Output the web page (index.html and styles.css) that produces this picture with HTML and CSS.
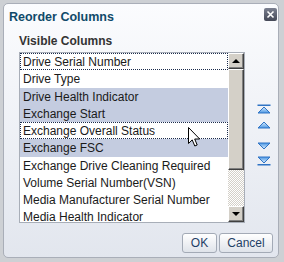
FILE: index.html
```html
<!DOCTYPE html>
<html lang="en">
<head>
    <meta charset="UTF-8">
    <title>Reorder Columns</title>
    <link rel="stylesheet" href="styles.css">
</head>
<body>
    <div class="dialog">
        <div class="dlg-header">
            <div class="dlg-title">Reorder Columns</div>
            <div class="dlg-close">
                <svg width="13" height="13" viewBox="0 0 13 13">
                    <path d="M3.5 3.5 L9.5 9.5 M9.5 3.5 L3.5 9.5" stroke="#fff" stroke-width="1.6"/>
                </svg>
            </div>
        </div>

        <div class="dlg-body">
            <div class="list-label">Visible Columns</div>
            <div class="list-row">
                <div class="listbox">
                    <div class="items">
                        <div class="item focus">Drive Serial Number</div>
                        <div class="item">Drive Type</div>
                        <div class="item selected">Drive Health Indicator</div>
                        <div class="item selected">Exchange Start</div>
                        <div class="item focus">Exchange Overall Status</div>
                        <div class="item selected">Exchange FSC</div>
                        <div class="item">Exchange Drive Cleaning Required</div>
                        <div class="item">Volume Serial Number(VSN)</div>
                        <div class="item">Media Manufacturer Serial Number</div>
                        <div class="item">Media Health Indicator</div>
                    </div>
                    <div class="scrollbar">
                        <div class="sb-btn"><span class="sb-arrow up"></span></div>
                        <div class="sb-thumb"></div>
                        <div class="sb-track"></div>
                        <div class="sb-btn"><span class="sb-arrow down"></span></div>
                    </div>
                </div>

                <div class="move-btns">
                    <svg class="mv mv-top" width="14" height="10" viewBox="0 0 14 10">
                        <defs>
                            <linearGradient id="gUp" x1="0" y1="0" x2="0" y2="1">
                                <stop offset="0" stop-color="#dcedfd"/>
                                <stop offset="1" stop-color="#4a97e4"/>
                            </linearGradient>
                            <linearGradient id="gDn" x1="0" y1="1" x2="0" y2="0">
                                <stop offset="0" stop-color="#dcedfd"/>
                                <stop offset="1" stop-color="#4a97e4"/>
                            </linearGradient>
                        </defs>
                        <rect x="0.5" y="0.5" width="13" height="1.5" fill="#2f73c4"/>
                        <path d="M7 3 L13 9 L1 9 Z" fill="url(#gUp)" stroke="#2f73c4" stroke-linejoin="round"/>
                    </svg>
                    <svg class="mv mv-up" width="14" height="10" viewBox="0 0 14 10">
                        <path d="M7 2 L13 8 L1 8 Z" fill="url(#gUp)" stroke="#2f73c4" stroke-linejoin="round"/>
                    </svg>
                    <svg class="mv mv-down" width="14" height="10" viewBox="0 0 14 10">
                        <path d="M1 2 L13 2 L7 8 Z" fill="url(#gDn)" stroke="#2f73c4" stroke-linejoin="round"/>
                    </svg>
                    <svg class="mv mv-bottom" width="14" height="10" viewBox="0 0 14 10">
                        <path d="M1 1 L13 1 L7 7 Z" fill="url(#gDn)" stroke="#2f73c4" stroke-linejoin="round"/>
                        <rect x="0.5" y="8" width="13" height="1.5" fill="#2f73c4"/>
                    </svg>
                </div>
            </div>
        </div>

        <div class="dlg-footer">
            <button class="btn btn-ok" type="button">OK</button>
            <button class="btn btn-cancel" type="button">Cancel</button>
        </div>
    </div>

    <svg class="cursor" width="13" height="21" viewBox="0 0 13 21">
        <path d="M0.5 0.5 L0.5 16.5 L4.2 12.9 L6.8 19 L9.2 18 L6.7 12 L11.7 12 Z" fill="#fff" stroke="#000" stroke-width="1" stroke-linejoin="miter"/>
    </svg>
</body>
</html>
```

FILE: styles.css
```css
body {
    margin: 0;
    padding: 3px 5px 4px 3px;
    background-color: #cdd0d4;
    font-family: "Liberation Sans", Arial, sans-serif;
    position: relative;
}
.dialog {
    width: 276px;
    height: 255px;
    box-sizing: border-box;
    border: 1px solid #a9aeb8;
    border-radius: 5px;
    background: linear-gradient(#fbfcfe, #e2e6ee);
    display: flex;
    flex-direction: column;
}
.dlg-header {
    display: flex;
    justify-content: space-between;
    align-items: flex-start;
    padding: 4px 1px 0 5px;
}
.dlg-title {
    margin-top: 1px;
    font-size: 12.5px;
    line-height: 16px;
    font-weight: bold;
    color: #104a6a;
}
.dlg-close {
    width: 13px;
    height: 13px;
    border-radius: 2px;
    background: linear-gradient(#7b8090, #444856);
}
.dlg-close svg {
    display: block;
}
.dlg-body {
    padding-left: 15px;
}
.list-label {
    margin-top: 9px;
    font-size: 12px;
    line-height: 15px;
    font-weight: bold;
    color: #333;
}
.list-row {
    display: flex;
    margin-top: 3px;
}
.listbox {
    width: 226px;
    height: 171px;
    box-sizing: border-box;
    border: 1px solid #a8aeb8;
    background-color: #fff;
    display: flex;
}
.items {
    flex: 1;
    overflow: hidden;
}
.item {
    height: 17.25px;
    box-sizing: border-box;
    border: 1px dotted transparent;
    padding-left: 2px;
    font-size: 12px;
    line-height: 16px;
    color: #1a1a1a;
    white-space: nowrap;
}
.item.selected {
    background-color: #c4cce0;
}
.item.focus {
    border-color: #1c2c4c;
}
.scrollbar {
    width: 16px;
    display: flex;
    flex-direction: column;
}
.sb-btn,
.sb-thumb {
    box-sizing: border-box;
    background-color: #d4d0c8;
    border-top: 1px solid #fff;
    border-left: 1px solid #fff;
    border-right: 1px solid #404040;
    border-bottom: 1px solid #404040;
    box-shadow: inset -1px -1px #808080;
}
.sb-btn {
    height: 16px;
    display: flex;
    justify-content: center;
    align-items: center;
}
.sb-arrow {
    width: 0;
    height: 0;
    border-left: 4px solid transparent;
    border-right: 4px solid transparent;
}
.sb-arrow.up {
    border-bottom: 4px solid #000;
}
.sb-arrow.down {
    border-top: 4px solid #000;
}
.sb-thumb {
    height: 101px;
}
.sb-track {
    flex: 1;
    background: repeating-conic-gradient(#d4d0c8 0 25%, #fff 0 50%) 0 0 / 2px 2px;
}
.move-btns {
    display: flex;
    flex-direction: column;
    margin-left: 12px;
    padding-top: 52px;
}
.mv {
    display: block;
}
.mv-up {
    margin-top: 6px;
}
.mv-down {
    margin-top: 11px;
}
.mv-bottom {
    margin-top: 5px;
}
.dlg-footer {
    display: flex;
    justify-content: flex-end;
    gap: 2px;
    margin-top: 10px;
    padding-right: 5px;
}
.btn {
    height: 20px;
    padding: 0;
    border: 1px solid #a3aab6;
    border-radius: 3px;
    background: linear-gradient(#ffffff, #dfe3ea);
    font-family: "Liberation Sans", Arial, sans-serif;
    font-size: 12px;
    color: #1f3f66;
}
.btn-ok {
    width: 35px;
}
.btn-cancel {
    width: 54px;
}
.cursor {
    position: absolute;
    left: 188px;
    top: 127px;
}
```
